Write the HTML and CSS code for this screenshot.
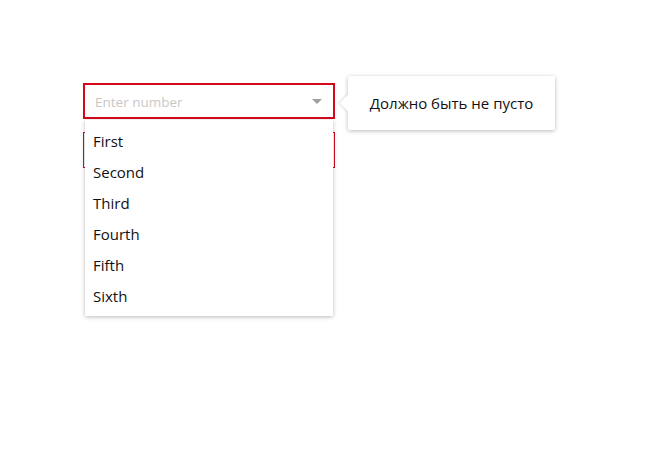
FILE: index.html
```html
<!DOCTYPE html>
<html>
<head>
<meta charset="utf-8">
<link rel="stylesheet" href="styles.css">
</head>
<body>
<div class="page">
  <div class="form">
    <div class="field field-top">
      <div class="select is-error">
        <span class="placeholder">Enter number</span>
        <span class="caret"></span>
      </div>
      <ul class="menu">
        <li>First</li>
        <li>Second</li>
        <li>Third</li>
        <li>Fourth</li>
        <li>Fifth</li>
        <li>Sixth</li>
      </ul>
      <div class="tooltip">Должно быть не пусто</div>
    </div>
    <div class="field">
      <div class="select is-error-soft"></div>
    </div>
  </div>
</div>
</body>
</html>
```
FILE: styles.css
```css
html, body {
  margin: 0;
  padding: 0;
  background: #fff;
}
.page {
  box-sizing: border-box;
  min-height: 468px;
  padding: 83px 0 0 83px;
  font-family: "Open Sans", "Noto Sans", sans-serif;
}
.form {
  width: 252px;
  display: flex;
  flex-direction: column;
  gap: 13px;
}
.field {
  position: relative;
}
.field-top {
  z-index: 2;
}
.select {
  box-sizing: border-box;
  height: 36px;
  display: flex;
  align-items: center;
  padding: 1px 11px 0 10px;
  background: #fff;
}
.is-error {
  border: 2px solid #d6081c;
}
.is-error-soft {
  border: 1px solid #d6081c;
}
.placeholder {
  flex: 1;
  font-size: 13.5px;
  color: #c8c8c8;
}
.caret {
  width: 0;
  height: 0;
  border-left: 5px solid transparent;
  border-right: 5px solid transparent;
  border-top: 5px solid #a0a0a0;
}
.menu {
  position: absolute;
  left: 2px;
  right: 2px;
  top: 37px;
  margin: 0;
  padding: 6px 0 4px;
  list-style: none;
  background: #fff;
  box-shadow: 0 1px 4px rgba(0,0,0,0.28);
}
.menu li {
  height: 31px;
  line-height: 31px;
  padding: 0 8px;
  font-size: 15px;
  color: #111;
}
.tooltip {
  position: absolute;
  left: 265px;
  top: -7px;
  width: 207px;
  height: 54px;
  box-sizing: border-box;
  display: flex;
  align-items: center;
  justify-content: center;
  background: #fff;
  font-size: 15px;
  color: #111;
  border-radius: 2px;
  box-shadow: 0 1px 4px rgba(0,0,0,0.28);
}
.tooltip::before {
  content: "";
  position: absolute;
  left: -6px;
  top: 21px;
  width: 12px;
  height: 12px;
  background: #fff;
  transform: rotate(45deg);
  box-shadow: -1px 1px 2px rgba(0,0,0,0.12);
}
.tooltip::after {
  content: "";
  position: absolute;
  left: 0;
  top: 15px;
  width: 10px;
  height: 24px;
  background: #fff;
}
```
